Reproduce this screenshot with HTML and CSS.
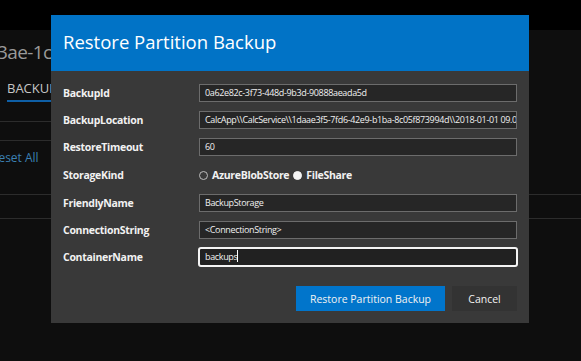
FILE: index.html
```html
<!DOCTYPE html>
<html>
<head>
<meta charset="utf-8">
<link rel="stylesheet" href="styles.css">
</head>
<body>
<div class="topbar"></div>
<div class="panel">
  <div class="pid">3ae-1cd</div>
  <div class="tabs"><span class="tab">BACKUPS</span></div>
  <div class="rule r1"></div>
  <div class="rule r2"></div>
  <div class="reset">Reset All</div>
  <div class="rule r3"></div>
  <div class="rule r4"></div>
</div>

<div class="modal">
  <div class="modal-head">Restore Partition Backup</div>
  <div class="modal-body">
    <div class="form">
      <div class="label">BackupId</div>
      <div class="field">0a62e82c-3f73-448d-9b3d-90888aeada5d</div>
      <div class="label">BackupLocation</div>
      <div class="field">CalcApp\\CalcService\\1daae3f5-7fd6-42e9-b1ba-8c05f873994d\\2018-01-01 09.00.00</div>
      <div class="label">RestoreTimeout</div>
      <div class="field">60</div>
      <div class="label">StorageKind</div>
      <div class="radios">
        <span class="radio"></span><span class="rlabel">AzureBlobStore</span>
        <span class="radio on"></span><span class="rlabel">FileShare</span>
      </div>
      <div class="label">FriendlyName</div>
      <div class="field">BackupStorage</div>
      <div class="label">ConnectionString</div>
      <div class="field">&lt;ConnectionString&gt;</div>
      <div class="label">ContainerName</div>
      <div class="field focus">backups<span class="caret"></span></div>
    </div>
    <div class="actions">
      <button class="btn primary">Restore Partition Backup</button>
      <button class="btn">Cancel</button>
    </div>
  </div>
</div>
</body>
</html>
```

FILE: styles.css
```css
html, body {
  margin: 0;
  padding: 0;
  width: 581px;
  height: 361px;
  overflow: hidden;
  background: #000;
  font-family: "Open Sans", "Noto Sans", sans-serif;
}
.topbar { height: 30px; background: #000; }
.panel {
  height: 331px;
  background: #0e0e0e;
  overflow: hidden;
  padding-top: 10px;
  box-sizing: border-box;
}
.pid {
  color: #9a9a9a;
  font-size: 19px;
  line-height: 24px;
  letter-spacing: -0.6px;
  margin-left: -3px;
  white-space: nowrap;
}
.tabs {
  margin-top: 12px;
  padding-left: 7px;
  height: 26px;
}
.tab {
  display: inline-block;
  color: #c6c6c6;
  font-size: 13px;
  line-height: 20px;
  padding-bottom: 2px;
  border-bottom: 2px solid #0e5fa6;
}
.rule { height: 1px; background: #2c2c2c; width: 60px; }
.rule.r1 { margin-top: 19px; }
.rule.r2 { margin-top: 18px; }
.reset {
  color: #3b80b4;
  font-size: 12px;
  line-height: 16px;
  margin-top: 9px;
  margin-left: -9px;
  white-space: nowrap;
}
.rule.r3 { margin-top: 28px; width: 100%; }
.rule.r4 { margin-top: 23px; width: 100%; }

.modal {
  position: absolute;
  left: 51px;
  top: 15px;
  width: 478px;
  background: #393939;
}
.modal-head {
  background: #0173c6;
  color: #fff;
  height: 56px;
  box-sizing: border-box;
  padding: 15px 12px 0;
  font-size: 18.5px;
  line-height: 24px;
}
.modal-body {
  padding: 13px 12px 12px;
}
.form {
  display: grid;
  grid-template-columns: 136px 318px;
  grid-template-rows: 18px 18px 18px 20px 18px 18px 18px;
  row-gap: 9px;
  align-items: center;
}
.label {
  color: #f2f2f2;
  font-size: 10.5px;
  font-weight: 700;
  letter-spacing: -0.3px;
  line-height: 18px;
}
.field {
  height: 18px;
  box-sizing: border-box;
  border: 1px solid #6c6c6c;
  background: #262626;
  color: #f0f0f0;
  font-size: 9px;
  letter-spacing: -0.35px;
  line-height: 16px;
  padding-left: 5px;
  white-space: nowrap;
  overflow: hidden;
}
.field.focus {
  margin: -1px;
  height: 20px;
  border: 2px solid #f4f4f4;
  border-radius: 3px;
  background: #212121;
  padding-left: 5px;
}
.caret {
  display: inline-block;
  width: 1px;
  height: 12px;
  background: #fff;
  vertical-align: -2px;
}
.radios {
  display: flex;
  align-items: center;
  height: 18px;
}
.radio {
  width: 9px;
  height: 9px;
  box-sizing: border-box;
  border-radius: 50%;
  border: 1px solid #bdbdbd;
  background: #3a3a3a;
  margin-right: 4px;
}
.radio.on {
  background: #f4f4f4;
  border-color: #f4f4f4;
  margin-left: 4px;
}
.rlabel {
  color: #f2f2f2;
  font-size: 10.5px;
  font-weight: 700;
  letter-spacing: -0.3px;
}
.actions {
  display: flex;
  justify-content: flex-end;
  gap: 7px;
  margin-top: 20px;
}
.btn {
  font-family: inherit;
  height: 25px;
  border: 0;
  padding: 0;
  background: #333333;
  color: #f2f2f2;
  font-size: 10.5px;
  width: 65px;
}
.btn.primary {
  background: #0175cb;
  width: 149px;
}
```
